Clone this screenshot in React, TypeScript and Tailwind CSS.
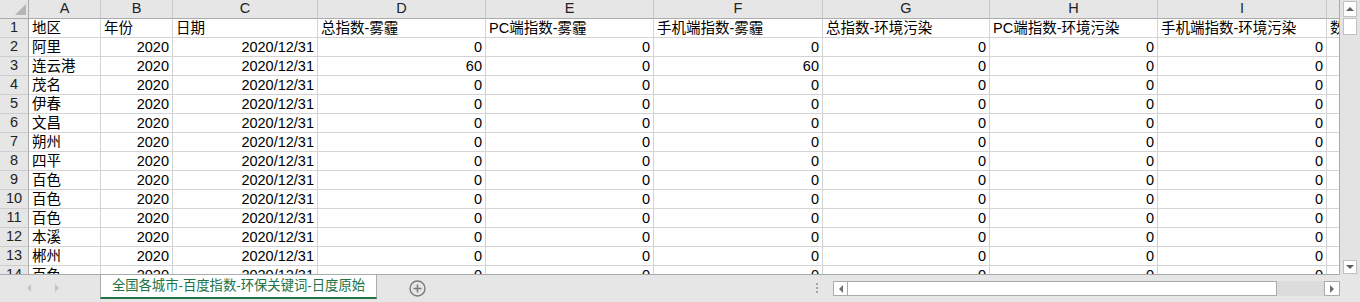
import React from "react";

const cols = [
  { letter: "A", w: "w-[72px]" },
  { letter: "B", w: "w-[72px]" },
  { letter: "C", w: "w-[145px]" },
  { letter: "D", w: "w-[168px]" },
  { letter: "E", w: "w-[168px]" },
  { letter: "F", w: "w-[169px]" },
  { letter: "G", w: "w-[167px]" },
  { letter: "H", w: "w-[168px]" },
  { letter: "I", w: "w-[169px]" },
  { letter: "J", w: "w-[120px]" },
];

const headers = [
  "地区",
  "年份",
  "日期",
  "总指数-雾霾",
  "PC端指数-雾霾",
  "手机端指数-雾霾",
  "总指数-环境污染",
  "PC端指数-环境污染",
  "手机端指数-环境污染",
  "数据来源",
];

const cities = ["阿里", "连云港", "茂名", "伊春", "文昌", "朔州", "四平", "百色", "百色", "百色", "本溪", "郴州", "百色"];

interface Cell {
  text: string;
  right: boolean;
}

function buildRows(): Cell[][] {
  const rows: Cell[][] = [headers.map((h) => ({ text: h, right: false }))];
  cities.forEach((city) => {
    const hot = city === "连云港";
    rows.push([
      { text: city, right: false },
      { text: "2020", right: true },
      { text: "2020/12/31", right: true },
      { text: hot ? "60" : "0", right: true },
      { text: "0", right: true },
      { text: hot ? "60" : "0", right: true },
      { text: "0", right: true },
      { text: "0", right: true },
      { text: "0", right: true },
      { text: "", right: true },
    ]);
  });
  return rows;
}

const rows = buildRows();

function Tri({ dir, color }: { dir: "up" | "down" | "left" | "right"; color: string }) {
  const pts = {
    up: "0,4 4,0 8,4",
    down: "0,0 8,0 4,4",
    left: "4,0 4,8 0,4",
    right: "0,0 0,8 4,4",
  }[dir];
  const vertical = dir === "up" || dir === "down";
  return (
    <svg width={vertical ? 8 : 4} height={vertical ? 4 : 8} viewBox={vertical ? "0 0 8 4" : "0 0 4 8"}>
      <polygon points={pts} fill={color} />
    </svg>
  );
}

export default function App() {
  return (
    <div className="w-[1360px] h-[302px] overflow-hidden flex flex-col bg-white text-black font-['Liberation_Sans','Noto_Sans_CJK_SC',sans-serif]">
      <div className="flex h-[275px] shrink-0">
        {/* 表格 */}
        <div className="w-[1340px] h-[275px] overflow-hidden border-r border-b border-[#ababab]">
          {/* 列标题 */}
          <div className="flex h-[19px]">
            <div className="w-[29px] shrink-0 h-full bg-[#e6e6e6] border-r border-b border-[#ababab] flex justify-end items-end pr-[2px] pb-[3px]">
              <svg width="11" height="11" viewBox="0 0 11 11">
                <polygon points="11,0 11,11 0,11" fill="#b5b5b5" />
              </svg>
            </div>
            {cols.map((c) => (
              <div
                key={c.letter}
                className={`${c.w} shrink-0 h-full bg-[#e6e6e6] border-r border-r-[#c9c9c9] border-b border-b-[#ababab] flex items-center justify-center text-[14.5px] text-[#222]`}
              >
                {c.letter}
              </div>
            ))}
          </div>

          {/* 数据行 */}
          {rows.map((row, i) => (
            <div key={i} className="flex h-[19px]">
              <div className="w-[29px] shrink-0 h-full bg-[#e6e6e6] border-r border-r-[#ababab] border-b border-b-[#cdcdcd] flex items-center justify-center text-[14.5px] text-[#222]">
                {i + 1}
              </div>
              {row.map((cell, j) => (
                <div
                  key={j}
                  className={`${cols[j].w} shrink-0 h-full border-r border-b border-[#d4d4d4] px-[3px] flex items-center whitespace-nowrap overflow-hidden text-[14.5px] leading-none pt-[1px] ${
                    cell.right ? "justify-end" : "justify-start"
                  }`}
                >
                  {cell.text}
                </div>
              ))}
            </div>
          ))}
        </div>

        {/* 垂直滚动条 */}
        <div className="w-[20px] h-[275px] bg-[#e3e3e3] flex flex-col pl-[3px]">
          <div className="mt-[1px] h-[16px] w-[14px] bg-white border border-[#c2c2c2] flex items-center justify-center">
            <Tri dir="up" color="#606060" />
          </div>
          <div className="mt-[1px] h-[17px] w-[14px] bg-white border border-[#c2c2c2]" />
          <div className="mt-auto mb-[1px] h-[14px] w-[14px] bg-white border border-[#c2c2c2] flex items-center justify-center">
            <Tri dir="down" color="#606060" />
          </div>
        </div>
      </div>

      {/* 工作表标签栏 */}
      <div className="flex-1 bg-[#e6e6e6] flex items-start">
        <div className="w-[100px] h-[26px] flex items-center pl-[27px] gap-[24px]">
          <Tri dir="left" color="#c4c4c4" />
          <Tri dir="right" color="#c4c4c4" />
        </div>
        <div className="w-[277px] h-[24px] bg-white border-x border-x-[#ababab] border-b-2 border-b-[#217346] flex items-center justify-center text-[13.33px] text-[#217346] whitespace-nowrap">
          全国各城市-百度指数-环保关键词-日度原始
        </div>
        <div className="ml-[32px] mt-[5px]">
          <svg width="17" height="17" viewBox="0 0 17 17">
            <circle cx="8.5" cy="8.5" r="7.5" fill="none" stroke="#7a7a7a" strokeWidth="1.4" />
            <path d="M8.5 4.5v8M4.5 8.5h8" stroke="#7a7a7a" strokeWidth="1.6" />
          </svg>
        </div>

        <div className="ml-auto flex items-start">
          <div className="mt-[8px] mr-[15px] flex flex-col gap-[2px]">
            <div className="w-[2px] h-[2px] bg-[#a6a6a6]" />
            <div className="w-[2px] h-[2px] bg-[#a6a6a6]" />
            <div className="w-[2px] h-[2px] bg-[#a6a6a6]" />
          </div>
          <div className="w-[507px] h-[15px] mt-[6px] flex">
            <div className="w-[15px] h-full bg-white border border-[#ababab] flex items-center justify-center">
              <Tri dir="left" color="#707070" />
            </div>
            <div className="w-[429px] h-full bg-white border-y border-r border-[#ababab]" />
            <div className="flex-1 h-full bg-[#dcdcdc]" />
            <div className="w-[16px] h-full bg-white border border-[#ababab] flex items-center justify-center">
              <Tri dir="right" color="#707070" />
            </div>
          </div>
          <div className="w-[20px]" />
        </div>
      </div>
    </div>
  );
}
